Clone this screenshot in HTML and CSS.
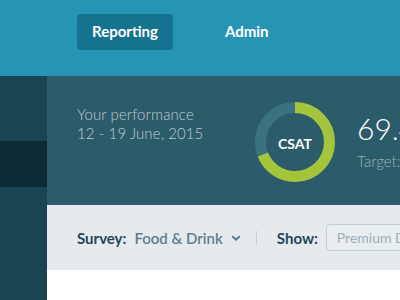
FILE: index.html
```html
<!DOCTYPE html>
<html lang="en">
<head>
  <meta charset="UTF-8" />
  <title>Reporting</title>
  <link rel="stylesheet" href="styles.css">
</head>
<body>

  <header class="topbar">
    <a class="nav-link active" href="#">Reporting</a>
    <a class="nav-link" href="#">Admin</a>
  </header>

  <div class="layout">
    <nav class="sidebar">
      <div class="side-item"></div>
    </nav>

    <main class="content">
      <section class="summary">
        <div class="period">
          <p>Your performance</p>
          <p>12 - 19 June, 2015</p>
        </div>

        <div class="donut">
          <svg width="80" height="80" viewBox="0 0 80 80">
            <circle cx="40" cy="40" r="34.5" fill="none" stroke="#3a7282" stroke-width="11"/>
            <!-- 69% of circumference (2*pi*34.5 = 216.77) -->
            <circle cx="40" cy="40" r="34.5" fill="none" stroke="#a4c43c" stroke-width="11"
                    stroke-dasharray="149.57 216.77" transform="rotate(-90 40 40)"/>
          </svg>
          <span class="donut-label">CSAT</span>
        </div>

        <div class="score">
          <div class="score-value">69.4%</div>
          <div class="score-target">Target: 75%</div>
        </div>
      </section>

      <section class="filters">
        <span class="filter-label">Survey:</span>
        <span class="filter-select">Food &amp; Drink
          <svg width="10" height="6" viewBox="0 0 10 6"><path d="M1.2 1.2L5 4.6l3.8-3.4" fill="none" stroke="#5f7f8d" stroke-width="2"/></svg>
        </span>
        <span class="divider"></span>
        <span class="filter-label">Show:</span>
        <div class="filter-input">Premium Dining</div>
      </section>
    </main>
  </div>

</body>
</html>
```

FILE: styles.css
```css
body {
  margin: 0;
  font-family: Lato, "Open Sans", sans-serif;
  background: #fff;
  overflow: hidden;
}

.topbar {
  height: 76px;
  background: #2595b3;
  display: flex;
  align-items: flex-start;
  padding: 14px 0 0 77px;
  box-sizing: border-box;
  gap: 37px;
}

.nav-link {
  display: block;
  height: 36px;
  line-height: 35px;
  padding: 0 15px;
  border-radius: 4px;
  color: #fff;
  font-weight: 700;
  font-size: 15px;
  text-decoration: none;
  white-space: nowrap;
}

.nav-link.active {
  background: #157390;
}

.layout {
  display: flex;
  min-height: 224px;
}

.sidebar {
  width: 47px;
  flex: none;
  background: #1b4453;
  padding-top: 65px;
  box-sizing: border-box;
}

.side-item {
  height: 46px;
  background: #0e2a36;
}

.content {
  flex: 1;
  min-width: 0;
}

/* performance summary */
.summary {
  height: 129px;
  background: #2c5b69;
  display: flex;
  align-items: flex-start;
  padding-left: 30px;
  box-sizing: border-box;
  white-space: nowrap;
  overflow: hidden;
}

.summary > * {
  flex: none;
}

.period {
  width: 178px;
  padding-top: 29px;
  color: #bccdd2;
  font-size: 15px;
  font-weight: 300;
  line-height: 19px;
  letter-spacing: 0.1px;
}

.period p {
  margin: 0;
}

.donut {
  position: relative;
  width: 80px;
  height: 80px;
  margin-top: 26px;
}

.donut svg {
  display: block;
}

.donut-label {
  position: absolute;
  inset: 0;
  display: flex;
  align-items: center;
  justify-content: center;
  color: #fff;
  font-weight: 700;
  font-size: 14px;
  padding-top: 3px;
}

.score {
  margin-left: 22px;
  padding-top: 37px;
}

.score-value {
  color: #fff;
  font-size: 30px;
  font-weight: 300;
  line-height: 30px;
}

.score-target {
  margin-top: 9px;
  color: #9cb2b9;
  font-size: 15px;
  font-weight: 300;
}

/* filter bar */
.filters {
  height: 65px;
  background: #e5eaee;
  display: flex;
  align-items: center;
  padding-left: 30px;
  white-space: nowrap;
  overflow: hidden;
  font-size: 15px;
}

.filters > * {
  flex: none;
}

.filter-label {
  color: #21485a;
  font-weight: 700;
}

.filter-select {
  margin-left: 8px;
  color: #5f7f8d;
  font-weight: 600;
  display: flex;
  align-items: center;
  gap: 8px;
}

.divider {
  width: 1px;
  height: 14px;
  background: #c4cfd5;
  margin: 0 20px 0 15px;
}

.filter-input {
  margin-left: 8px;
  height: 27px;
  line-height: 26px;
  box-sizing: border-box;
  border: 1px solid #c2ced5;
  border-radius: 4px;
  padding: 0 10px;
  color: #9eafb7;
  font-size: 14px;
  background: #e8edf0;
}
```
